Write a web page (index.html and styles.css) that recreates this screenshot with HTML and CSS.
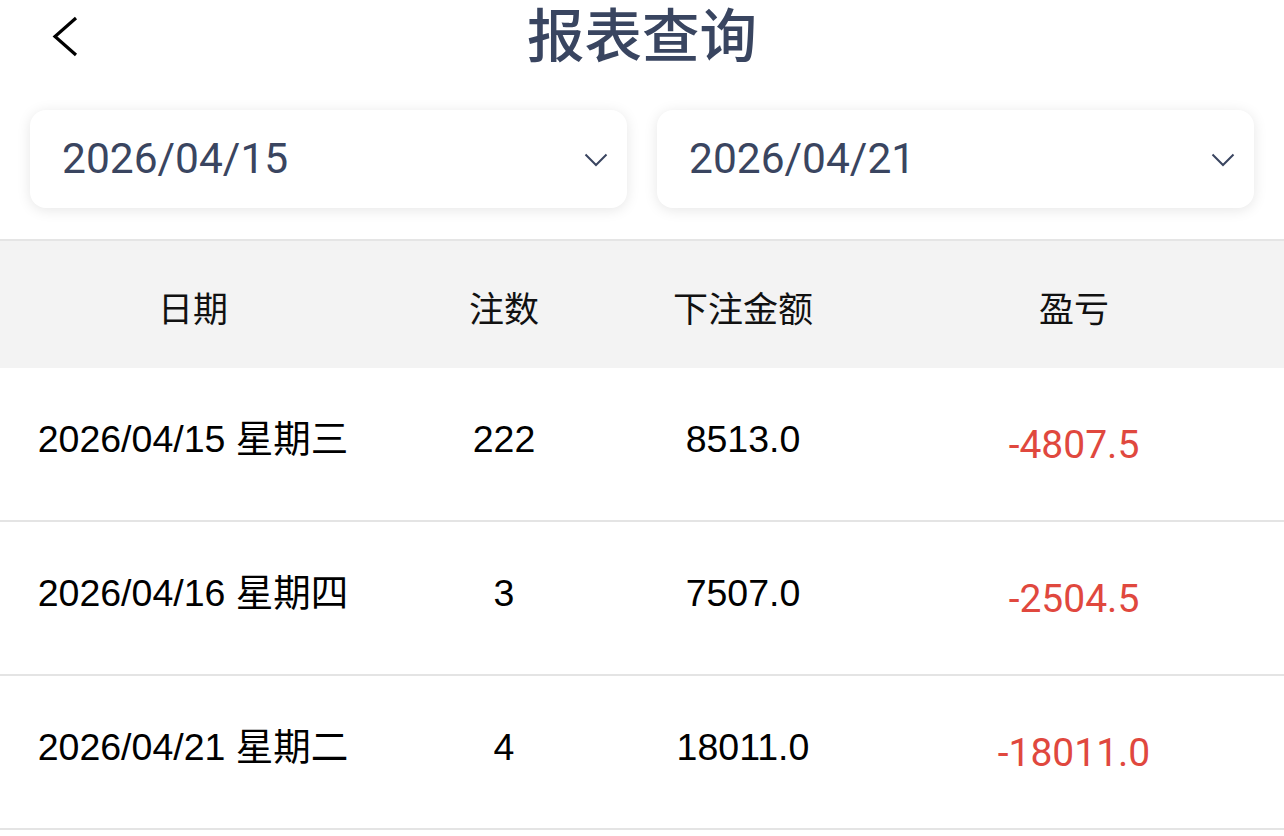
FILE: index.html
```html
<!DOCTYPE html>
<html lang="zh-CN">
<head>
<meta charset="utf-8">
<title>报表查询</title>
<link rel="stylesheet" href="styles.css">
</head>
<body>
<div class="page">
  <header class="nav">
    <div class="nav-side">
      <svg class="back" width="28" height="44" viewBox="0 0 28 44">
        <polyline points="25,3 4,21.5 25,40" fill="none" stroke="#000" stroke-width="3.2" stroke-linecap="butt" stroke-linejoin="miter"/>
      </svg>
    </div>
    <h1 class="title">报表查询</h1>
    <div class="nav-side"></div>
  </header>

  <section class="filters">
    <div class="picker">
      <span class="picker-value">2026/04/15</span>
      <svg class="chev" width="24" height="14" viewBox="0 0 24 14"><polyline points="1.5,1.5 12,12 22.5,1.5" fill="none" stroke="#3a4560" stroke-width="2"/></svg>
    </div>
    <div class="picker">
      <span class="picker-value">2026/04/21</span>
      <svg class="chev" width="24" height="14" viewBox="0 0 24 14"><polyline points="1.5,1.5 12,12 22.5,1.5" fill="none" stroke="#3a4560" stroke-width="2"/></svg>
    </div>
  </section>

  <section class="table">
    <div class="row head">
      <div class="cell">日期</div>
      <div class="cell">注数</div>
      <div class="cell">下注金额</div>
      <div class="cell">盈亏</div>
    </div>
    <div class="row">
      <div class="cell">2026/04/15 星期三</div>
      <div class="cell">222</div>
      <div class="cell">8513.0</div>
      <div class="cell loss">-4807.5</div>
    </div>
    <div class="row">
      <div class="cell">2026/04/16 星期四</div>
      <div class="cell">3</div>
      <div class="cell">7507.0</div>
      <div class="cell loss">-2504.5</div>
    </div>
    <div class="row">
      <div class="cell">2026/04/21 星期二</div>
      <div class="cell">4</div>
      <div class="cell">18011.0</div>
      <div class="cell loss">-18011.0</div>
    </div>
  </section>
</div>
</body>
</html>
```

FILE: styles.css
```css
html, body {
  margin: 0;
  padding: 0;
  background: #ffffff;
}

body {
  font-family: "Liberation Sans", "Noto Sans CJK SC", sans-serif;
  color: #000;
}

.page {
  width: 1284px;
}

.nav {
  height: 74px;
  display: grid;
  grid-template-columns: 200px 1fr 200px;
  align-items: start;
}

.nav-side {
  display: flex;
  align-items: center;
  height: 74px;
}

.back {
  display: block;
  margin-left: 51px;
}

.title {
  margin: 0;
  text-align: center;
  font-family: "Noto Sans CJK SC", sans-serif;
  font-weight: 500;
  font-size: 57.5px;
  line-height: 64px;
  color: #394560;
}

.filters {
  display: flex;
  gap: 30px;
  padding: 36px 30px 31px;
}

.picker {
  flex: 1;
  height: 98px;
  background: #fff;
  border-radius: 16px;
  box-shadow: 0 2px 14px rgba(0, 0, 0, 0.10);
  display: flex;
  align-items: center;
  justify-content: space-between;
  padding: 0 19px 0 32px;
  box-sizing: border-box;
}

.picker-value {
  font-family: Roboto, "Liberation Sans", sans-serif;
  font-size: 42.5px;
  color: #3a4560;
  line-height: 1;
}

.chev {
  display: block;
  margin-top: 2px;
}

.table {
  border-top: 2px solid #e5e5e5;
}

.row {
  display: grid;
  grid-template-columns: 386px 236px 242px 1fr;
  height: 152px;
  align-items: center;
  border-bottom: 2px solid #e4e4e4;
  font-size: 37.5px;
}

.row.head {
  height: 127px;
  background: #f3f3f3;
  border-bottom: none;
  font-family: "Noto Sans CJK SC", sans-serif;
  font-size: 35px;
  color: #111;
}

.cell {
  text-align: center;
  white-space: nowrap;
  line-height: 1;
}

.row.head .cell {
  padding-top: 4px;
}

.row:not(.head) .cell {
  margin-top: -8px;
}

.row .cell.loss {
  color: #e0483e;
  font-family: Roboto, "Liberation Sans", sans-serif;
  font-size: 39px;
  margin-top: 2px;
}
```
